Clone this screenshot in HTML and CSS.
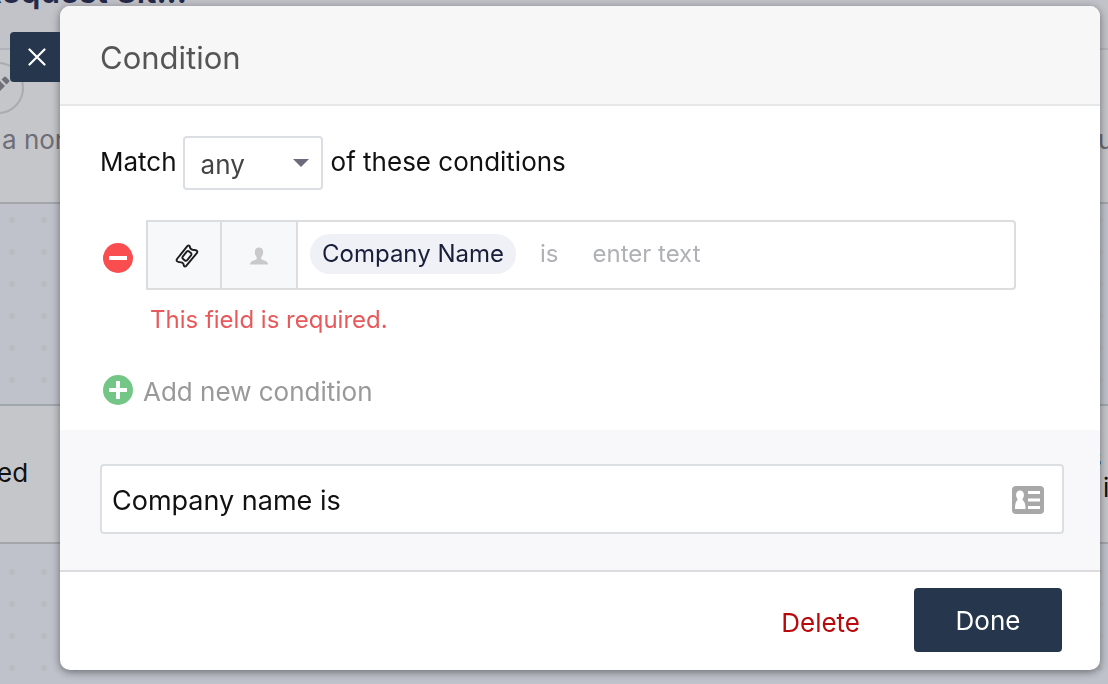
FILE: index.html
```html
<!DOCTYPE html>
<html lang="en">
<head>
<meta charset="utf-8">
<meta name="viewport" content="width=device-width, initial-scale=1">
<title>Condition</title>
<link rel="stylesheet" href="styles.css">
</head>
<body>
<div class="canvas" aria-hidden="true">
  <div class="node node-top">
    <span class="node-title">Request Sit...</span>
    <span class="node-edit">
      <svg width="52" height="52" viewBox="0 0 52 52"><circle cx="26" cy="26" r="25" fill="none" stroke="#aaabb0" stroke-width="2"/><path d="M17 35v-5l11-11 5 5-11 11zM29.500 17.500l2.500-2.500q1-1 2 0l3 3q1 1 0 2l-2.500 2.500z" fill="#707178"/></svg>
    </span>
    <span class="node-text node-text-left">a non</span>
    <span class="node-text node-text-right">u</span>
  </div>
  <div class="node node-mid">
    <span class="node-label node-label-left">ed</span>
    <span class="node-label node-label-s">s</span>
    <span class="node-label node-label-i">i</span>
  </div>
</div>
<main class="modal" role="dialog" aria-labelledby="modal-title">
  <button class="close" type="button" aria-label="Close">
    <svg width="18" height="18" viewBox="0 0 18 18"><path d="M1.500 1.500l15 15M16.500 1.500l-15 15" stroke="#fff" stroke-width="2.200" stroke-linecap="round"/></svg>
  </button>
  <header class="modal-head"><h1 class="title" id="modal-title">Condition</h1></header>
  <section class="conditions">
    <div class="match">
      <label for="match-mode">Match</label>
      <span class="select-wrap"><select class="select" id="match-mode"><option>any</option><option>all</option></select></span>
      <span>of these conditions</span>
    </div>
    <div class="rule">
      <button class="round remove" type="button" aria-label="Remove condition">
        <svg width="30" height="30" viewBox="0 0 30 30"><circle cx="15" cy="15" r="15" fill="#f94d50"/><path d="M6 15h18" stroke="#fff" stroke-width="4"/></svg>
      </button>
      <div class="rule-box">
        <button class="cell" type="button" aria-label="Ticket">
          <svg width="24" height="24" viewBox="0 0 24 24" fill="none" stroke="#1c1c1e" stroke-width="1.900" stroke-linejoin="round"><path d="M12.300 2.200Q13.500 1 14.700 2.100Q15 5.200 17.600 5.700Q19.800 5.800 21.300 6.300Q22.900 7.200 22 8.900L11.200 21.900Q9.900 23 8.900 21.900Q8.800 18.900 6.300 18.400Q4 18.300 2.400 17.500Q1 16.500 2 15Z"/><path d="M11.700 7.600Q12.800 6.600 14 7.400L15.900 8.900Q16.900 9.900 16.200 11.100L12.200 16.100Q11.100 17.300 9.800 16.400L7.900 14.800Q7 13.900 7.700 12.700Z"/></svg>
        </button>
        <button class="cell cell-person" type="button" aria-label="Person">
          <svg width="18" height="18" viewBox="0 0 18 18" fill="#c9c9cb"><path d="M9 0.500c2.800 0 4.200 1.800 4.200 4.500 0 2.200-1 4.200-2 5.200v1.600c0 .7 1 1 3 1.600C16.600 14.100 18 15 18 17.500H0c0-2.500 1.400-3.400 3.800-4.100 2-.6 3-.9 3-1.600v-1.600C5.800 9.200 4.800 7.200 4.800 5 4.800 2.300 6.200.5 9 .5z"/></svg>
        </button>
        <div class="rule-body">
          <button class="pill" type="button">Company Name</button>
          <button class="operator" type="button">is</button>
          <input class="value" type="text" placeholder="enter text" aria-label="Value" aria-describedby="value-error">
        </div>
      </div>
    </div>
    <p class="error" id="value-error">This field is required.</p>
    <button class="add" type="button">
      <svg width="30" height="30" viewBox="0 0 30 30"><circle cx="15" cy="15" r="15" fill="#74c686"/><path d="M6 15h18M15 6v18" stroke="#fff" stroke-width="4"/></svg>
      <span>Add new condition</span>
    </button>
  </section>
  <section class="summary">
    <div class="name-box">
      <input class="name" type="text" value="Company name is" aria-label="Condition name">
      <svg width="32" height="28" viewBox="0 0 32 28"><rect width="32" height="28" rx="4" fill="#a8a8a8"/><g fill="#fff"><ellipse cx="8" cy="9" rx="4" ry="4.500"/><path d="M5.500 12h5v2q3 1.500 3 9H3q0-7.500 2.500-9zM16 5h12v3H16zM16 12.500h12v3H16zM16 20h12v3H16z"/></g></svg>
    </div>
  </section>
  <footer class="actions">
    <button class="delete" type="button">Delete</button>
    <button class="done" type="button">Done</button>
  </footer>
</main>
</body>
</html>
```
FILE: styles.css
```css
* { box-sizing: border-box; }
body {
  margin: 0;
  padding: 6px 8px 14px 60px;
  background: #bfc2cb;
  color: #111;
  font: 26px/32px Inter, "Liberation Sans", sans-serif;
}
button, input, select { font: inherit; color: inherit; }
button { padding: 0; border: 0; background: none; cursor: pointer; }
svg { display: block; flex: none; }

/* diagram behind the dialog */
.canvas {
  position: fixed;
  inset: 0;
  overflow: hidden;
  background: radial-gradient(circle, #b9bbc0 2px, transparent 4px) -4px 12px / 32px 32px #bfc2cb;
}
.node {
  position: absolute;
  left: 0;
  right: 0;
  background: #c5c6ca;
  border-bottom: 2px solid #a3a7ac;
}
.node-top { top: 48px; height: 156px; border-top: 2px solid #b2b4bb; }
.node-top::before {
  content: "";
  position: absolute;
  inset: -50px 0 100%;
  background: #c2c3c9;
  border-bottom: 2px solid #b2b4bb;
}
.node-mid { top: 404px; height: 140px; border-top: 2px solid #a1a8ad; }
.node span { position: absolute; white-space: nowrap; }
.node .node-title { right: calc(100% - 187px); top: -74px; font-size: 32px; font-weight: 600; color: #25294a; }
.node .node-edit { left: -28px; top: 12px; }
.node-text { top: 74px; color: #6d6e77; }
.node-text-left { left: 2px; }
.node-text-right { left: calc(100% - 10px); }
.node-label-left { left: -3px; top: 51px; }
.node-label-s { left: calc(100% - 20px); top: 36px; }
.node-label-i { left: calc(100% - 5px); top: 66px; }

.modal {
  position: relative;
  border-radius: 10px;
  background: #fff;
  box-shadow: 0 2px 8px rgba(0, 0, 0, .45);
}
.close {
  position: absolute;
  top: 26px;
  left: -50px;
  width: 50px;
  height: 50px;
  display: grid;
  place-items: center;
  padding-left: 4px;
  border-radius: 4px 0 0 4px;
  background: #25364d;
}
.modal-head {
  padding: 32px 40px 26px;
  border-bottom: 2px solid #e6e7e8;
  border-radius: 10px 10px 0 0;
  background: #f7f7f7;
}
.title { margin: 0; font-size: 31px; line-height: 40px; font-weight: 400; color: #555; }

.conditions { padding: 30px 36px 24px 40px; }
.match { display: flex; align-items: center; gap: 6px; line-height: 52px; }
.match > label, .match > span:last-child { padding-bottom: 2px; }
.match > span:last-child { padding-left: 2px; }
.select-wrap { position: relative; display: block; }
.select-wrap::after {
  content: "";
  position: absolute;
  right: 14px;
  top: 23px;
  border: 8px solid transparent;
  border-top-color: #6b6b7c;
  border-bottom: 0;
  pointer-events: none;
}
.select {
  display: block;
  width: 140px;
  height: 54px;
  padding: 1px 16px 0;
  appearance: none;
  border: 2px solid #dbdfe3;
  border-radius: 4px;
  background: #fff;
  color: #444;
}
.rule { display: flex; align-items: center; margin: 30px 48px 0 3px; }
.round { padding-top: 6px; }
.rule-box {
  flex: 1;
  display: flex;
  margin-left: 13px;
  min-height: 70px;
  border: 2px solid #dcdddf;
  border-radius: 0 4px 4px 0;
}
.cell {
  display: grid;
  place-items: center;
  width: 74px;
  padding-top: 2px;
  padding-left: 6px;
  border-right: 2px solid #dcdddf;
  background: #f7f8fa;
}
.cell-person { width: 76px; padding-left: 0; }
.rule-body {
  flex: 1;
  display: flex;
  align-items: flex-start;
  padding: 12px 12px 0;
  font-size: 24px;
  line-height: 40px;
}
.pill { padding: 0 12px; border-radius: 20px; background: #f0f1f6; color: #181d3a; }
.operator { margin: 0 34px 0 24px; color: #b0b1b5; }
.value { flex: 1; min-width: 0; height: 40px; padding: 0; border: 0; outline: 0; background: none; }
.value::placeholder { color: #b0b1b5; opacity: 1; }
.error { margin: 14px 0 0 50px; font-size: 24px; color: #e8595b; }
.add { display: flex; align-items: center; gap: 10px; margin: 38px 0 0 3px; color: #999; }
.add span { padding-top: 2px; margin-bottom: -2px; }

.summary { padding: 34px 36px 36px 40px; background: #f8f8fb; border-bottom: 2px solid #dcdcde; }
.name-box {
  display: flex;
  align-items: center;
  height: 70px;
  padding: 2px 18px 0 10px;
  border: 2px solid #dcdfe1;
  border-radius: 4px;
  background: #fff;
}
.name { flex: 1; min-width: 0; height: 60px; padding: 0; border: 0; outline: 0; background: none; font-size: 27px; }

.actions { display: flex; justify-content: flex-end; align-items: center; gap: 54px; padding: 16px 38px 18px; }
.delete { padding-top: 6px; color: #b8090d; }
.done { min-width: 148px; height: 64px; padding-top: 2px; border-radius: 4px; background: #25364d; color: #fff; }
```
